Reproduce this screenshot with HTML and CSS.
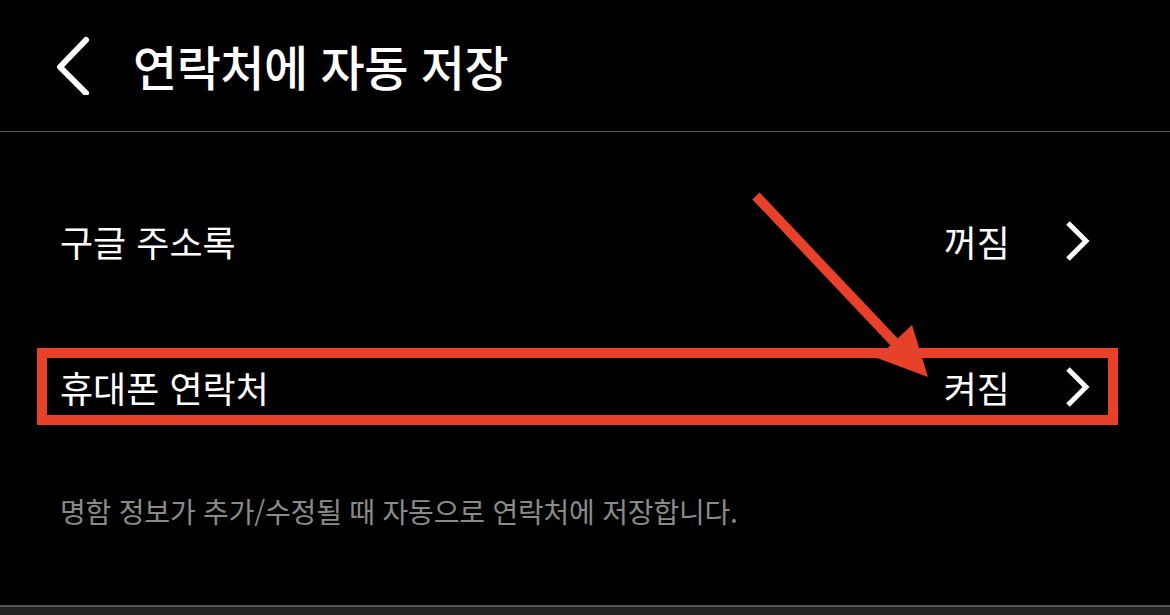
FILE: index.html
```html
<!DOCTYPE html>
<html lang="ko">
<head>
    <meta charset="UTF-8">
    <title>연락처에 자동 저장</title>
    <link rel="stylesheet" href="styles.css">
</head>
<body>
    <div class="screen">
        <header class="topbar">
            <button class="back" aria-label="뒤로">
                <svg width="40" height="60" viewBox="0 0 40 60">
                    <polyline points="34,5 8,32 34,58" fill="none" stroke="#fff" stroke-width="6" stroke-linecap="round" stroke-linejoin="round"/>
                </svg>
            </button>
            <h1>연락처에 자동 저장</h1>
        </header>

        <main class="content">
            <div class="list">
                <div class="row">
                    <span class="label">구글 주소록</span>
                    <span class="value">꺼짐</span>
                    <svg class="chev" width="26" height="42" viewBox="0 0 26 42">
                        <polyline points="4,3 22,21 4,39" fill="none" stroke="#fff" stroke-width="5"/>
                    </svg>
                </div>
                <div class="row highlighted">
                    <span class="label">휴대폰 연락처</span>
                    <span class="value">켜짐</span>
                    <svg class="chev" width="26" height="42" viewBox="0 0 26 42">
                        <polyline points="4,3 22,21 4,39" fill="none" stroke="#fff" stroke-width="5"/>
                    </svg>
                </div>
            </div>

            <p class="note">명함 정보가 추가/수정될 때 자동으로 연락처에 저장합니다.</p>
        </main>

        <div class="bottom-bar"></div>

        <!-- annotation arrow -->
        <svg class="arrow" width="1170" height="615" viewBox="0 0 1170 615">
            <line x1="756" y1="196" x2="898" y2="346" stroke="#e8412a" stroke-width="10"/>
            <polygon points="912,325 877,358 928,377" fill="#e8412a"/>
        </svg>
    </div>
</body>
</html>
```

FILE: styles.css
```css
* {
    margin: 0;
    padding: 0;
    box-sizing: border-box;
}

body {
    font-family: 'Noto Sans CJK KR', 'Noto Sans', sans-serif;
    background: #000;
    color: #fff;
}

.screen {
    position: relative;
    width: 1170px;
    height: 615px;
    overflow: hidden;
    display: flex;
    flex-direction: column;
}

.topbar {
    height: 132px;
    display: flex;
    align-items: center;
    padding-left: 52px;
    padding-bottom: 2px;
    border-bottom: 1px solid #555;
}

.back {
    background: none;
    border: none;
    width: 40px;
    height: 60px;
    display: flex;
    margin-right: 41px;
}

h1 {
    font-size: 48px;
    font-weight: 500;
    letter-spacing: -0.5px;
}

.content {
    flex: 1;
}

.list {
    padding-top: 70px;
    display: flex;
    flex-direction: column;
    gap: 69px;
}

.row {
    position: relative;
    height: 77px;
    display: flex;
    align-items: center;
    padding: 0 80px 0 60px;
    font-size: 36px;
}

.row .label {
    flex: 1;
}

.row .value {
    margin-right: 54px;
}

.highlighted::after {
    content: '';
    position: absolute;
    left: 37px;
    right: 52px;
    top: 0;
    bottom: 0;
    border: 10px solid #e8412a;
}

.note {
    margin-top: 68px;
    padding-left: 60px;
    font-size: 28px;
    line-height: 36px;
    color: #8a8a8a;
    letter-spacing: -0.2px;
}

.bottom-bar {
    height: 10px;
    background: #222422;
    border-top: 2px solid #555;
}

.arrow {
    position: absolute;
    left: 0;
    top: 0;
    pointer-events: none;
}
```
